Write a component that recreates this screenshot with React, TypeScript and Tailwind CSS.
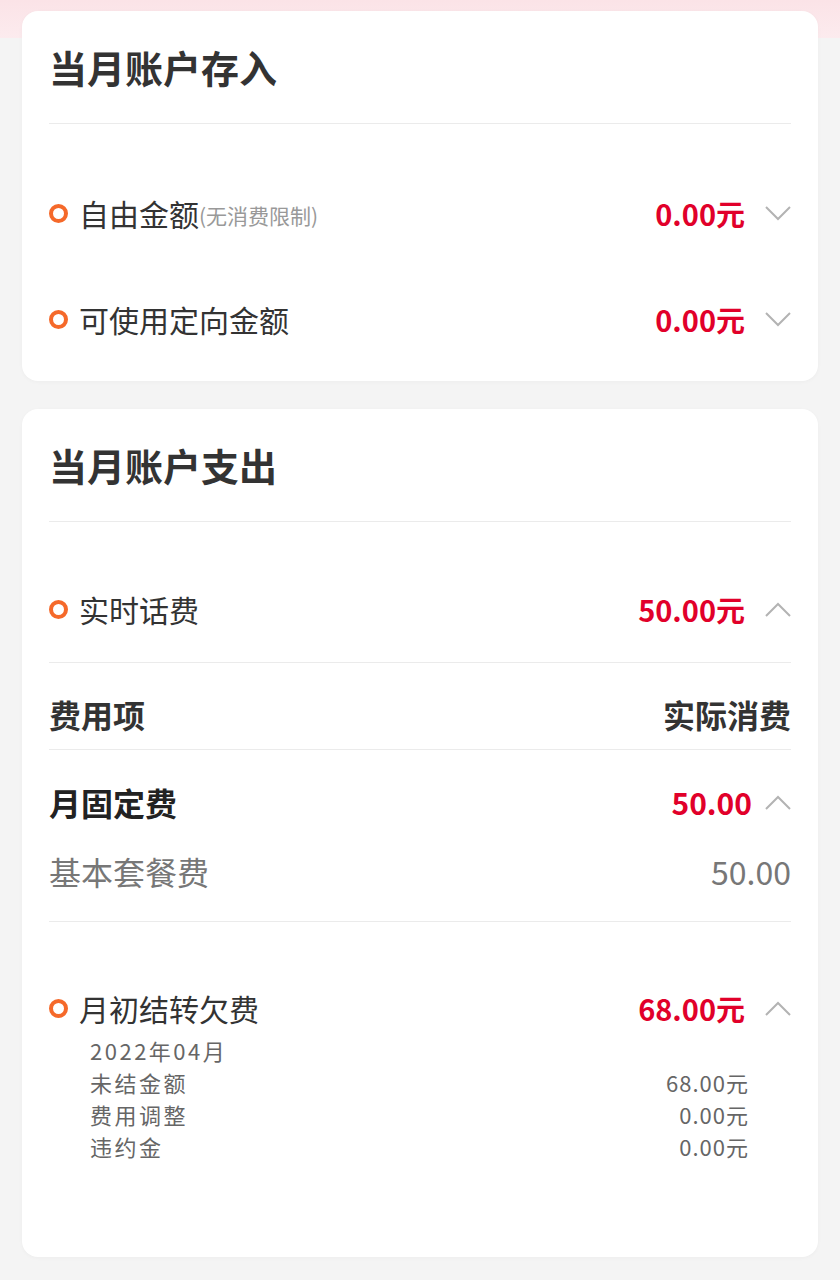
import type { ReactNode } from 'react';

const FONT = { fontFamily: '"Noto Sans CJK SC", "Noto Sans", sans-serif' };

function Ring() {
  return <span className="w-[19px] h-[19px] rounded-full border-4 border-[#f5692a] shrink-0" />;
}

function Chevron({ up }: { up?: boolean }) {
  return (
    <svg width="26" height="15" viewBox="0 0 26 15" className="shrink-0">
      <path
        d={up ? 'M1 14 L13 2 L25 14' : 'M1 1 L13 13 L25 1'}
        fill="none"
        stroke="#b3b3b3"
        strokeWidth="2"
      />
    </svg>
  );
}

function Card({ title, children }: { title: string; children: ReactNode }) {
  return (
    <div className="mx-[22px] bg-white rounded-[16px] shadow-[0_1px_4px_rgba(0,0,0,0.03)] px-[27px]">
      <h2 className="pt-[28px] pb-[28px] text-[38px] leading-[56px] font-bold text-[#333]">{title}</h2>
      <div className="h-px bg-[#ebebeb]" />
      {children}
    </div>
  );
}

function AmountRow({ label, note, value, up }: { label: string; note?: string; value: string; up?: boolean }) {
  return (
    <div className="h-[106px] flex items-center">
      <Ring />
      <span className="ml-[11px] text-[30px] text-[#333] leading-none">{label}</span>
      {note && <span className="text-[21px] text-[#999] leading-none mt-[4px]">{note}</span>}
      <span className="ml-auto text-[29px] font-bold text-[#e1002a] leading-none">{value}</span>
      <span className="ml-[20px]">
        <Chevron up={up} />
      </span>
    </div>
  );
}

const arrears = [
  { label: '未结金额', value: '68.00元' },
  { label: '费用调整', value: '0.00元' },
  { label: '违约金', value: '0.00元' },
];

export default function App() {
  return (
    <div style={FONT} className="min-h-[1280px] bg-[#f4f4f4] relative">
      <div className="absolute top-0 left-0 right-0 h-[38px] bg-gradient-to-b from-[#fbe3e7] to-[#fcebee]" />
      <div className="relative pt-[11px] flex flex-col gap-[28px]">
        <Card title="当月账户存入">
          <div className="pt-[36px] pb-[9px]">
            <AmountRow label="自由金额" note="(无消费限制)" value="0.00元" />
            <AmountRow label="可使用定向金额" value="0.00元" />
          </div>
        </Card>

        <Card title="当月账户支出">
          <div className="pt-[34px]">
            <AmountRow label="实时话费" value="50.00元" up />
          </div>
          <div className="h-px bg-[#ebebeb]" />
          <div className="flex justify-between pt-[31px] pb-[15px] text-[32px] leading-[40px] font-bold text-[#333]">
            <span>费用项</span>
            <span>实际消费</span>
          </div>
          <div className="h-px bg-[#ebebeb]" />
          <div className="pt-[32px] pb-[30px]">
            <div className="flex items-center h-[40px]">
              <span className="text-[32px] font-bold text-[#222]">月固定费</span>
              <span className="ml-auto text-[30px] font-bold text-[#e1002a]">50.00</span>
              <span className="ml-[13px]">
                <Chevron up />
              </span>
            </div>
            <div className="flex items-center h-[40px] mt-[29px] text-[32px] text-[#777]">
              <span>基本套餐费</span>
              <span className="ml-auto">50.00</span>
            </div>
          </div>
          <div className="h-px bg-[#ebebeb]" />
          <div className="pt-[66px] pb-[95px]">
            <div className="flex items-center h-[40px]">
              <Ring />
              <span className="ml-[11px] text-[30px] text-[#333] leading-none">月初结转欠费</span>
              <span className="ml-auto text-[29px] font-bold text-[#e1002a] leading-none">68.00元</span>
              <span className="ml-[20px]">
                <Chevron up />
              </span>
            </div>
            <div className="mt-[6px] pl-[41px] pr-[42px] text-[22px] leading-[32px] tracking-[2.5px] text-[#666]">
              <div>2022年04月</div>
              {arrears.map((a) => (
                <div key={a.label} className="flex justify-between">
                  <span>{a.label}</span>
                  <span className="tracking-[1px]">{a.value}</span>
                </div>
              ))}
            </div>
          </div>
        </Card>
      </div>
    </div>
  );
}
